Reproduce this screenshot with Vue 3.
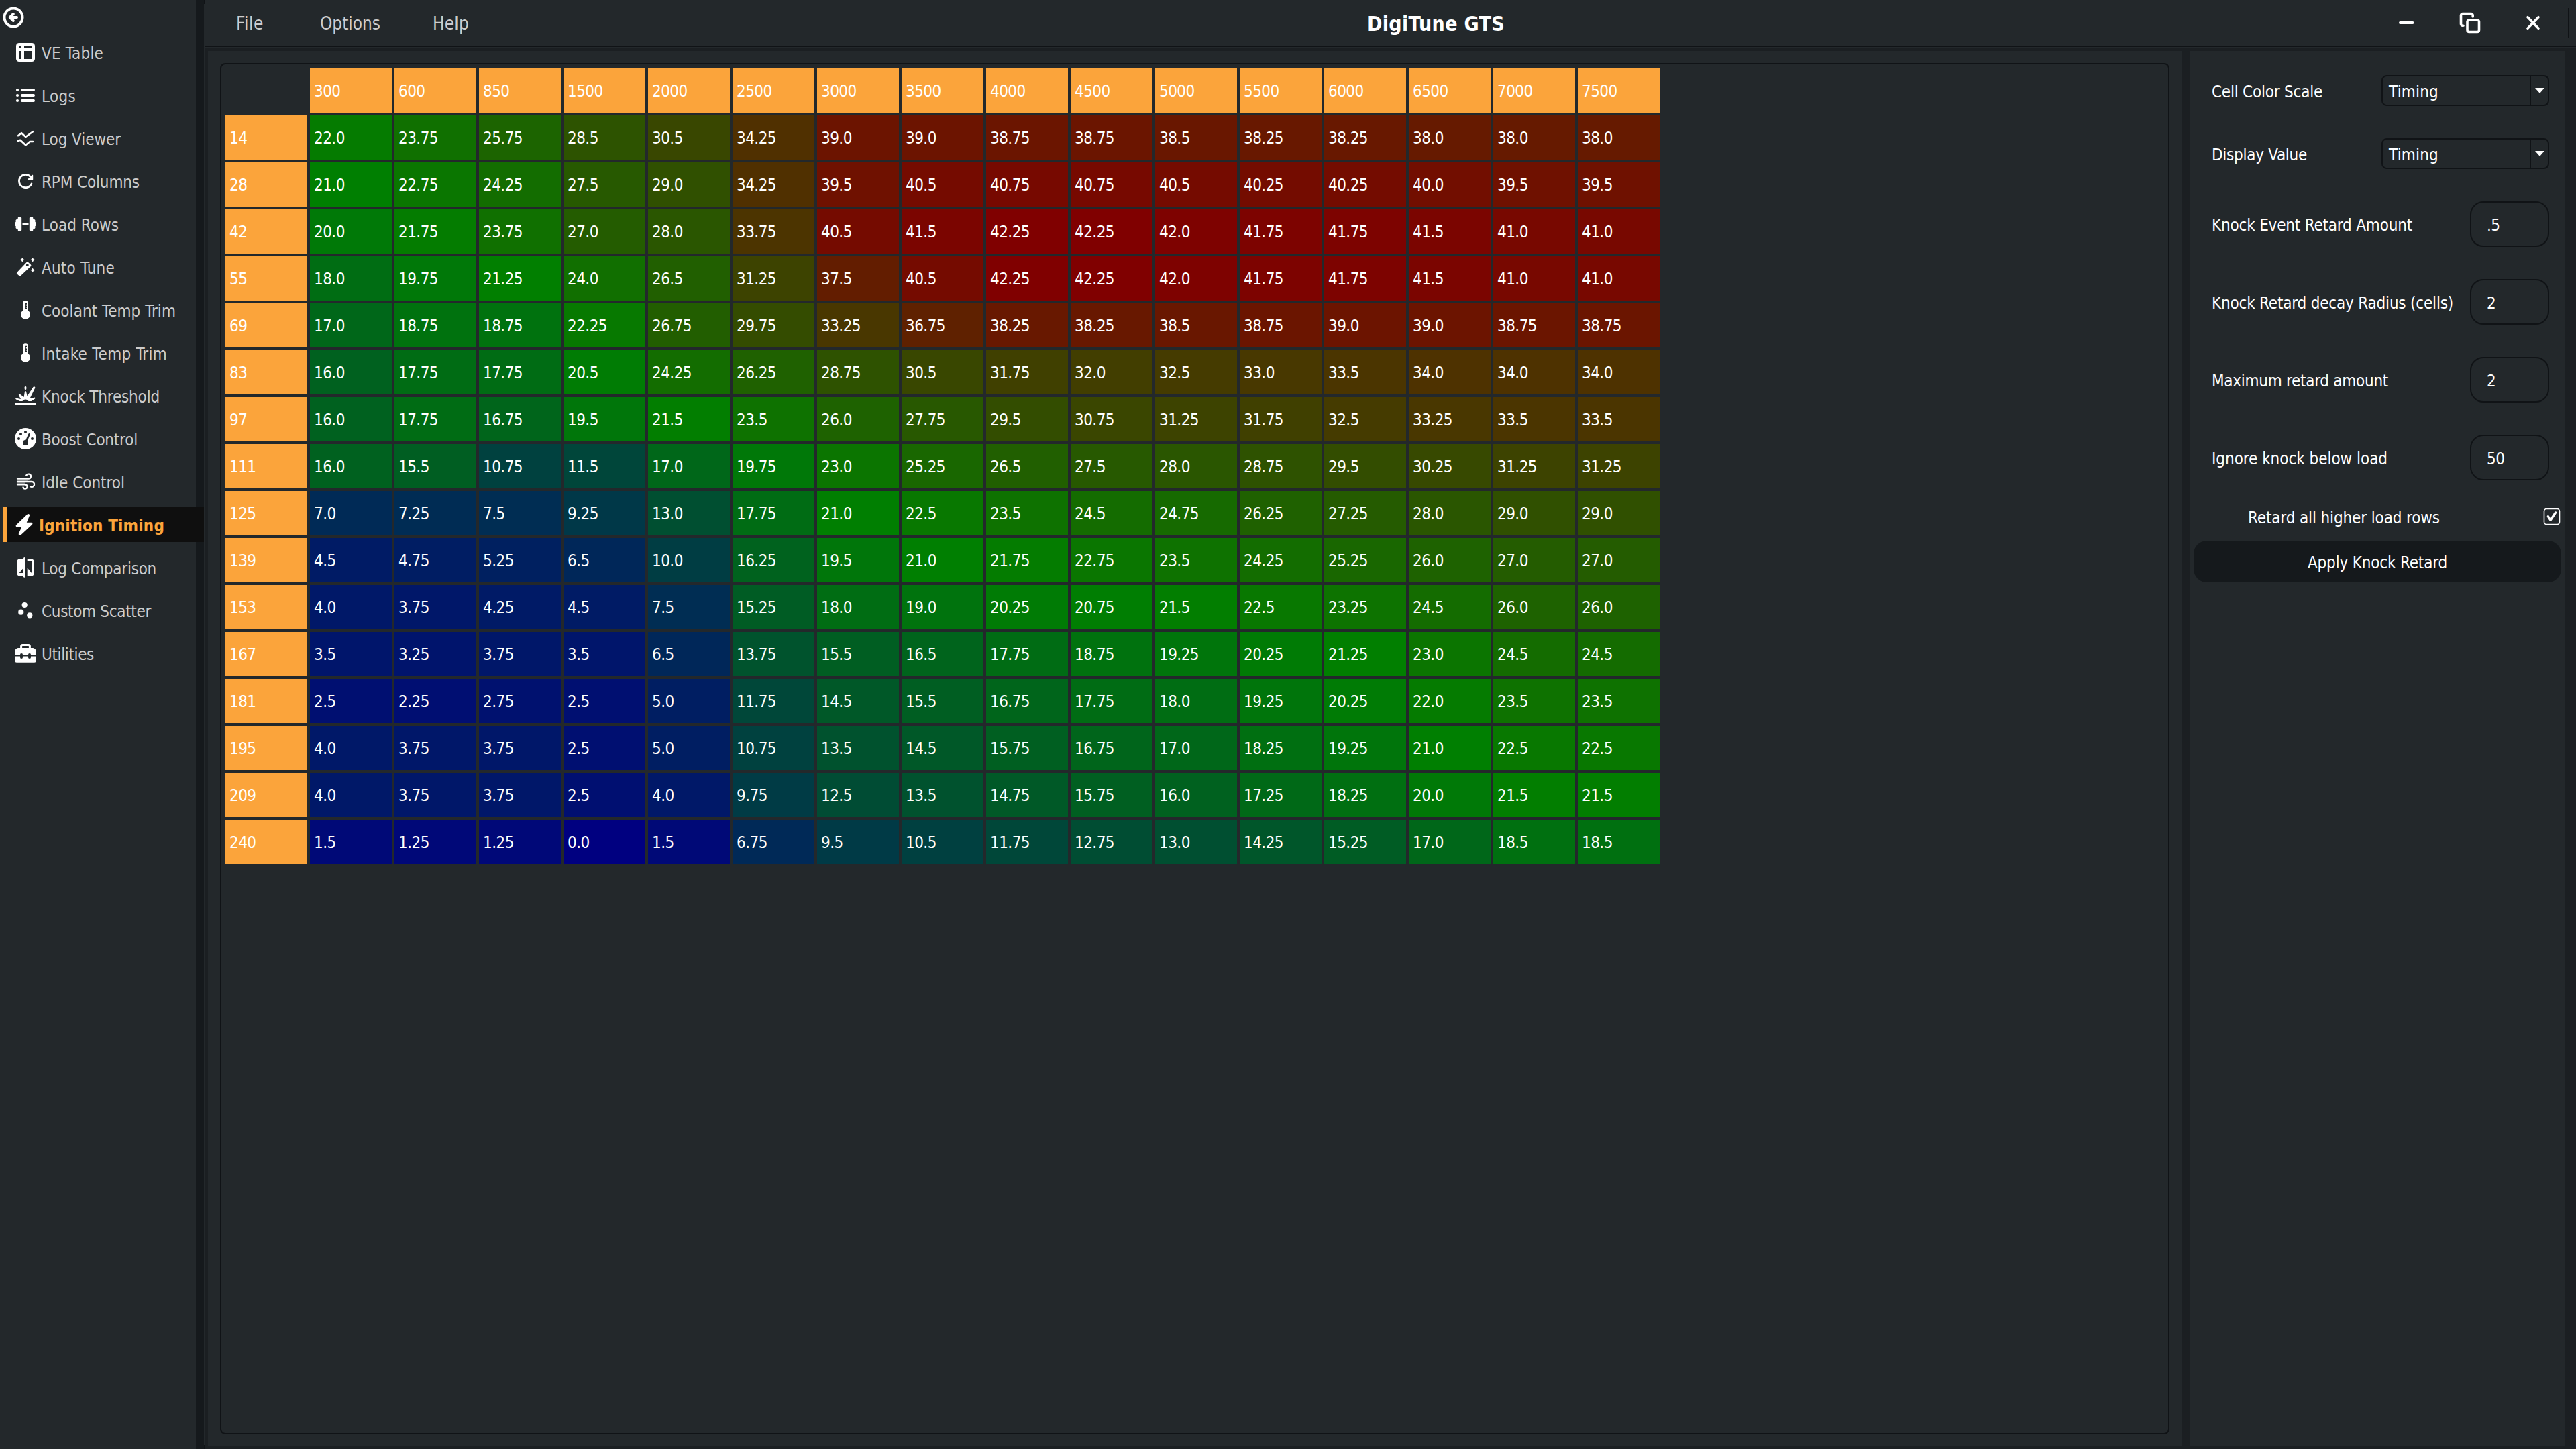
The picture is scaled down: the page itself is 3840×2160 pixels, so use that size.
<script setup>
// v-fit sets the tracking so that a label takes the given advance width
const vFit = {
  mounted(el, { value }) {
    if (!value) return
    const natural = el.getBoundingClientRect().width
    el.style.letterSpacing = `${(value - natural) / el.textContent.length}px`
  },
}

const nav = [
  { icon: 'table', label: 'VE Table', w: 92 },
  { icon: 'list', label: 'Logs', w: 51 },
  { icon: 'lines', label: 'Log Viewer', w: 118 },
  { icon: 'rotate', label: 'RPM Columns', w: 146 },
  { icon: 'dumbbell', label: 'Load Rows', w: 115 },
  { icon: 'wand', label: 'Auto Tune', w: 109 },
  { icon: 'thermo', label: 'Coolant Temp Trim', w: 200 },
  { icon: 'thermo', label: 'Intake Temp Trim', w: 187 },
  { icon: 'burst', label: 'Knock Threshold', w: 176 },
  { icon: 'gauge', label: 'Boost Control', w: 143 },
  { icon: 'wind', label: 'Idle Control', w: 124 },
  { icon: 'bolt', label: 'Ignition Timing', w: 187, active: true },
  { icon: 'compare', label: 'Log Comparison', w: 171 },
  { icon: 'scatter', label: 'Custom Scatter', w: 163 },
  { icon: 'toolbox', label: 'Utilities', w: 78 },
]

const rpm = [300, 600, 850, 1500, 2000, 2500, 3000, 3500, 4000, 4500, 5000, 5500, 6000, 6500, 7000, 7500]

const rows = `
14 22.0 23.75 25.75 28.5 30.5 34.25 39.0 39.0 38.75 38.75 38.5 38.25 38.25 38.0 38.0 38.0
28 21.0 22.75 24.25 27.5 29.0 34.25 39.5 40.5 40.75 40.75 40.5 40.25 40.25 40.0 39.5 39.5
42 20.0 21.75 23.75 27.0 28.0 33.75 40.5 41.5 42.25 42.25 42.0 41.75 41.75 41.5 41.0 41.0
55 18.0 19.75 21.25 24.0 26.5 31.25 37.5 40.5 42.25 42.25 42.0 41.75 41.75 41.5 41.0 41.0
69 17.0 18.75 18.75 22.25 26.75 29.75 33.25 36.75 38.25 38.25 38.5 38.75 39.0 39.0 38.75 38.75
83 16.0 17.75 17.75 20.5 24.25 26.25 28.75 30.5 31.75 32.0 32.5 33.0 33.5 34.0 34.0 34.0
97 16.0 17.75 16.75 19.5 21.5 23.5 26.0 27.75 29.5 30.75 31.25 31.75 32.5 33.25 33.5 33.5
111 16.0 15.5 10.75 11.5 17.0 19.75 23.0 25.25 26.5 27.5 28.0 28.75 29.5 30.25 31.25 31.25
125 7.0 7.25 7.5 9.25 13.0 17.75 21.0 22.5 23.5 24.5 24.75 26.25 27.25 28.0 29.0 29.0
139 4.5 4.75 5.25 6.5 10.0 16.25 19.5 21.0 21.75 22.75 23.5 24.25 25.25 26.0 27.0 27.0
153 4.0 3.75 4.25 4.5 7.5 15.25 18.0 19.0 20.25 20.75 21.5 22.5 23.25 24.5 26.0 26.0
167 3.5 3.25 3.75 3.5 6.5 13.75 15.5 16.5 17.75 18.75 19.25 20.25 21.25 23.0 24.5 24.5
181 2.5 2.25 2.75 2.5 5.0 11.75 14.5 15.5 16.75 17.75 18.0 19.25 20.25 22.0 23.5 23.5
195 4.0 3.75 3.75 2.5 5.0 10.75 13.5 14.5 15.75 16.75 17.0 18.25 19.25 21.0 22.5 22.5
209 4.0 3.75 3.75 2.5 4.0 9.75 12.5 13.5 14.75 15.75 16.0 17.25 18.25 20.0 21.5 21.5
240 1.5 1.25 1.25 0.0 1.5 6.75 9.5 10.5 11.75 12.75 13.0 14.25 15.25 17.0 18.5 18.5
`
  .trim()
  .split('\n')
  .map((line) => {
    const [load, ...cells] = line.split(' ')
    return { load, cells }
  })

// blue (0) -> green (midpoint) -> red (maximum)
const MAX = 42.25
function heat(value) {
  const t = (Number(value) / MAX) * 2
  const c = (x) => Math.round(128 * x)
  return t < 1 ? `rgb(0, ${c(t)}, ${c(1 - t)})` : `rgb(${c(t - 1)}, ${c(2 - t)}, 0)`
}

const combos = [
  { label: 'Cell Color Scale', w: 165 },
  { label: 'Display Value', w: 142 },
]
const inputs = [
  { label: 'Knock Event Retard Amount', w: 299, value: '.5' },
  { label: 'Knock Retard decay Radius (cells)', w: 360, value: '2' },
  { label: 'Maximum retard amount', w: 263, value: '2' },
  { label: 'Ignore knock below load', w: 262, value: '50' },
]
</script>

<template>
  <div class="app">
    <aside class="sidebar">
      <div class="back">
        <svg width="32" height="32" viewBox="0 0 32 32" fill="none" stroke="#fff" stroke-width="4" stroke-linecap="round" stroke-linejoin="round">
          <circle cx="16" cy="16" r="13.5" />
          <path d="M21 16H11.5M15.8 11L10.8 16L15.8 21" />
        </svg>
      </div>
      <nav>
        <div v-for="item in nav" :key="item.label" class="item" :class="{ active: item.active }">
          <svg class="icon" width="32" height="32" viewBox="0 0 32 32" fill="#fff">
            <g v-if="item.icon === 'table'" fill="none" stroke="#fff" stroke-width="4">
              <rect x="4" y="4" width="24" height="24" rx="2.5" />
              <path d="M4 12H28M12 4V28" />
            </g>
            <g v-else-if="item.icon === 'list'">
              <path d="M10.8 8H28M10.8 16H28M10.8 24H28" stroke="#fff" stroke-width="4" stroke-linecap="round" />
              <circle cx="4" cy="8" r="2.1" /><circle cx="4" cy="16" r="2.1" /><circle cx="4" cy="24" r="2.1" />
            </g>
            <g v-else-if="item.icon === 'lines'" fill="none" stroke="#fff" stroke-width="2.6" stroke-linecap="round" stroke-linejoin="round">
              <path d="M5 12.2L10 8.2L16.3 14L27 6.2" />
              <path d="M5 20L8.2 18.8L16.3 26.2L22.5 21H27" />
            </g>
            <g v-else-if="item.icon === 'rotate'">
              <path d="M25 20A9.7 9.7 0 1 1 23.6 9.8" fill="none" stroke="#fff" stroke-width="2.8" stroke-linecap="round" />
              <path d="M27.2 7.6V13.4a1 1 0 0 1-1 1H20.2a.9.9 0 0 1-.6-1.5L25.6 7a.95.95 0 0 1 1.6.6z" />
            </g>
            <g v-else-if="item.icon === 'dumbbell'">
              <path d="M11.5 16H20.5" stroke="#fff" stroke-width="2.6" />
              <rect x="4.7" y="5" width="5.5" height="22" rx="2" /><rect x="21.8" y="5" width="5.5" height="22" rx="2" />
              <rect x="1.6" y="9" width="5" height="14" rx="1.6" /><rect x="25.4" y="9" width="5" height="14" rx="1.6" />
              <rect x="0.2" y="13" width="4" height="6" rx="1.6" /><rect x="27.8" y="13" width="4" height="6" rx="1.6" />
            </g>
            <g v-else-if="item.icon === 'wand'">
              <path fill-rule="evenodd" d="M3.3 24.2L17.6 9a1.8 1.8 0 0 1 2.5 0L23.9 12.4a1.8 1.8 0 0 1 0 2.5L9 29a1.8 1.8 0 0 1-2.5 0L3.3 26.3a1.5 1.5 0 0 1 0-2.1zM18.8 11.3a1.9 1.9 0 1 0 .01 0z" />
              <path d="M11.3 2l1.2 2.1 2.3 1.2-2.3 1.2-1.2 2.3-1.2-2.3-2.3-1.2 2.3-1.2zM26.7 2l1.2 2.1 2.3 1.2-2.3 1.2-1.2 2.3-1.2-2.3-2.3-1.2 2.3-1.2zM26.7 17.4l1.2 2.1 2.3 1.2-2.3 1.2-1.2 2.3-1.2-2.3-2.3-1.2 2.3-1.2z" />
            </g>
            <g v-else-if="item.icon === 'thermo'">
              <path d="M12 6.3a4 4 0 0 1 8 0V17a7 7 0 1 1-8 0z" />
              <path d="M15.2 5.8h2.8v2h-1.2v1.6h1.2v1.6h-1.2v1.4h1.2v2.6h-2.8z" fill="#23282b" />
            </g>
            <g v-else-if="item.icon === 'burst'">
              <path d="M1.4 28.4H30.6" stroke="#fff" stroke-width="3" stroke-linecap="round" />
              <path d="M16 3.2V5.8" stroke="#fff" stroke-width="2.6" stroke-linecap="round" />
              <path d="M2 19.4L9 21L6 15.2C5.4 13.8 6.8 12.9 8 13.7L13.6 18L15 9.8C15.3 8.7 16.7 8.7 17 9.8L18.6 16.5L27.4 3.1C28.5 1.5 31 2.7 30.2 4.6L23 19L25 20.2L28.8 18.5C30.6 18.2 31 19.8 29.8 20.7L24.6 24H20.5C19 20.5 13 20.5 11.5 24H7.5L2 21.4C.8 20.6 1 19.3 2 19.4z" />
            </g>
            <g v-else-if="item.icon === 'gauge'">
              <circle cx="16" cy="16" r="16" />
              <g fill="#23282b">
                <circle cx="6" cy="16" r="2" /><circle cx="9" cy="9" r="2" /><circle cx="16" cy="6" r="2" /><circle cx="26" cy="16" r="2" />
                <circle cx="16" cy="22" r="4" />
                <path d="M21.5 9.5L17 20" stroke="#23282b" stroke-width="2.8" stroke-linecap="round" />
              </g>
            </g>
            <g v-else-if="item.icon === 'wind'" fill="none" stroke="#fff" stroke-width="2.3" stroke-linecap="round">
              <path d="M4 13.8H19M4 18.2H16" stroke="#7b7e80" stroke-width="1.8" stroke-linecap="butt" />
              <path d="M4 11.6H20.5a3.5 3.5 0 1 0-3.3-4.8" />
              <path d="M4 16H25.3a3.9 3.9 0 1 1-2.3 7.1" />
              <path d="M4 20.4H15.5a3.1 3.1 0 1 1-3 4" />
            </g>
            <path v-else-if="item.icon === 'bolt'" d="M18.8.6c1.7-1.3 3.9.2 3.1 2.2L17.8 12.7H24.5c1.9 0 2.6 2.1 1.2 3.4L9 31.4c-1.7 1.3-3.9-.2-3.1-2.2L10.3 19.6H3.6c-1.9 0-2.6-2.1-1.2-3.4z" />
            <g v-else-if="item.icon === 'compare'">
              <path fill-rule="evenodd" d="M6.7 3.7H13V28.3H6.7a3 3 0 0 1-3-3V6.7a3 3 0 0 1 3-3zM6.7 24H13V16.5z" />
              <rect x="13" y="1" width="3" height="29.7" rx="1.5" />
              <path d="M18.7 3.7H25.3a3 3 0 0 1 3 3V25.3a3 3 0 0 1-3 3H18.7V16.2L25 24V6.7H18.7z" />
            </g>
            <g v-else-if="item.icon === 'scatter'">
              <circle cx="14.7" cy="8" r="4.1" /><circle cx="9.3" cy="18.7" r="4.1" /><circle cx="22.3" cy="23.4" r="4.1" />
            </g>
            <g v-else>
              <path d="M9.6 9V5.500a2 2 0 0 1 2-2H20.4a2 2 0 0 1 2 2V9" fill="none" stroke="#fff" stroke-width="3" />
              <path d="M0 14C0 10.500 2.500 8 6 8H26C29.500 8 32 10.500 32 14V26.700a3 3 0 0 1-3 3H3a3 3 0 0 1-3-3z" />
              <path d="M0 19.700H32" stroke="#23282b" stroke-width="1.6" />
              <rect x="8" y="16" width="4" height="8" rx="2" fill="#23282b" /><rect x="20" y="16" width="4" height="8" rx="2" fill="#23282b" />
            </g>
          </svg>
          <span v-fit="item.w" class="label">{{ item.label }}</span>
        </div>
      </nav>
    </aside>

    <div class="seam"></div>

    <main class="main">
      <header class="header">
        <div class="menu">
          <span v-fit="41">File</span>
          <span v-fit="90">Options</span>
          <span v-fit="54">Help</span>
        </div>
        <h1><span v-fit="205">DigiTune GTS</span></h1>
        <div class="window">
          <svg width="32" height="32" viewBox="0 0 32 32" fill="none" stroke="#fff" stroke-width="4" stroke-linecap="round">
            <path d="M6 16H24.5" />
          </svg>
          <svg width="32" height="32" viewBox="0 0 32 32" fill="none" stroke="#fff" stroke-width="3.6" stroke-linecap="round">
            <rect x="12" y="12" width="17.5" height="17.5" rx="2.5" />
            <path d="M6 20.2H5a2.5 2.5 0 0 1-2.5-2.5V5A2.5 2.5 0 0 1 5 2.5H17.7A2.5 2.5 0 0 1 20.2 5V7" />
          </svg>
          <svg width="32" height="32" viewBox="0 0 32 32" fill="none" stroke="#fff" stroke-width="3.6" stroke-linecap="round">
            <path d="M8 7.7L24 24.3M24 7.7L8 24.3" />
          </svg>
          <i class="edge"></i>
        </div>
      </header>

      <div class="workspace">
        <section class="content">
          <div class="frame">
            <div class="grid">
              <div class="cell"></div>
              <div v-for="r in rpm" :key="r" class="cell head">{{ r }}</div>
              <template v-for="row in rows" :key="row.load">
                <div class="cell head">{{ row.load }}</div>
                <div v-for="(v, i) in row.cells" :key="i" class="cell" :style="{ background: heat(v) }">{{ v }}</div>
              </template>
            </div>
          </div>
        </section>

        <section class="panel">
          <div class="fields">
            <div v-for="c in combos" :key="c.label" class="field">
              <span v-fit="c.w" class="label">{{ c.label }}</span>
              <div class="combo">
                <div class="combo-text"><span v-fit="74" class="label">Timing</span></div>
                <div class="combo-arrow">
                  <svg width="14" height="8" viewBox="0 0 14 8"><path d="M0 0H14L7.8 7H6.2z" fill="#fff" /></svg>
                </div>
              </div>
            </div>
            <div v-for="f in inputs" :key="f.label" class="field">
              <span v-fit="f.w" class="label">{{ f.label }}</span>
              <div class="input">{{ f.value }}</div>
            </div>
          </div>
          <div class="check-row">
            <span v-fit="286" class="label">Retard all higher load rows</span>
            <svg width="26" height="26" viewBox="0 0 26 26" fill="none" stroke="#fff">
              <rect x="1.5" y="1.5" width="23" height="23" rx="3.5" stroke-width="1.6" />
              <path d="M7.5 12.8L11 18.3L18.5 7" stroke-width="3.4" stroke-linecap="round" stroke-linejoin="round" />
            </svg>
          </div>
          <div class="apply"><span v-fit="208" class="label">Apply Knock Retard</span></div>
        </section>
      </div>
    </main>
  </div>
</template>

<style>
body {
  background: #23282b;
  overflow: hidden;
}
</style>

<style scoped>
.app {
  display: flex;
  width: 3840px;
  height: 2160px;
  background: #23282b;
  color: #fff;
  font-family: "DejaVu Sans Condensed", "DejaVu Sans", sans-serif;
  font-stretch: condensed;
  font-size: 24px;
  line-height: 30px;
  white-space: nowrap;
}
.app svg {
  display: block;
  flex: none;
}
.sidebar {
  width: 304px;
  flex: none;
  background: linear-gradient(to right, #23282b 292px, #15191c 292px);
}
.back {
  height: 42px;
  padding: 10px 0 0 4px;
}
nav {
  display: flex;
  flex-direction: column;
  gap: 12px;
}
.item {
  display: flex;
  align-items: center;
  gap: 8px;
  height: 52px;
  margin-left: 4px;
  padding-left: 18px;
  box-sizing: border-box;
  color: #cccccc;
}
.item.active {
  background: #0f0f0f;
  border-left: 6px solid #fba43b;
  padding-left: 12px;
  gap: 4px;
  color: #fba43b;
  font-weight: bold;
}
.label {
  padding-top: 4px;
}
.seam {
  width: 2px;
  flex: none;
  background: linear-gradient(#101316 6px, #23282b 6px, #23282b 2154px, #101316 2154px);
}
.main {
  flex: 1;
  display: flex;
  flex-direction: column;
  gap: 2px;
}
.header {
  display: flex;
  align-items: center;
  height: 68px;
  flex: none;
  border-bottom: 2px solid #101316;
}
.menu {
  display: flex;
  gap: 84px;
  width: 1732px;
  padding: 2px 0 0 46px;
  box-sizing: border-box;
  font-size: 26px;
  color: #cccccc;
}
.menu span:last-child {
  margin-left: -6px;
}
h1 {
  flex: 1;
  margin: 0;
  padding-top: 4px;
  font-size: 30px;
  line-height: 34px;
  font-weight: bold;
}
.window {
  display: flex;
  align-items: center;
  gap: 62px;
  padding-right: 10px;
}
.edge {
  width: 2px;
  height: 44px;
  margin-left: -26px;
  background: #101316;
}
.workspace {
  flex: 1;
  display: flex;
  gap: 12px;
  padding: 4px 16px 4px 4px;
  background: #1b1f22;
}
.content {
  flex: 1;
  display: flex;
  padding: 18px;
  background: #23282b;
}
.frame {
  flex: 1;
  padding: 6px;
  border: 2px solid #101316;
  border-radius: 8px;
}
.grid {
  display: grid;
  grid-template-columns: repeat(17, 122px);
  grid-auto-rows: 66px;
  gap: 4px;
}
.cell {
  display: flex;
  align-items: center;
  padding: 2px 0 0 6px;
  letter-spacing: -0.55px;
}
.head {
  background: #fba43b;
}
.panel {
  width: 560px;
  flex: none;
  background: #23282b;
}
.fields {
  display: flex;
  flex-direction: column;
  gap: 48px;
  padding: 36px 24px 0 33px;
}
.field {
  display: flex;
  align-items: center;
  justify-content: space-between;
}
.combo {
  display: flex;
  width: 250px;
  height: 46px;
  box-sizing: border-box;
  border: 2px solid #101316;
  border-radius: 8px;
}
.combo-text {
  flex: 1;
  display: flex;
  align-items: center;
  padding-left: 9px;
}
.combo-arrow {
  display: flex;
  align-items: center;
  justify-content: center;
  width: 25px;
  border-left: 2px solid #101316;
}
.input {
  display: flex;
  align-items: center;
  width: 118px;
  height: 68px;
  box-sizing: border-box;
  padding: 3px 0 0 23px;
  border: 2px solid #101316;
  border-radius: 20px;
  letter-spacing: -0.55px;
}
.check-row {
  display: flex;
  align-items: center;
  justify-content: space-between;
  height: 26px;
  margin-top: 41px;
  padding: 0 7px 0 87px;
}
.apply {
  display: flex;
  align-items: center;
  justify-content: center;
  height: 62px;
  margin: 23px 6px 0;
  border-radius: 20px;
  background: #15191c;
}
</style>
